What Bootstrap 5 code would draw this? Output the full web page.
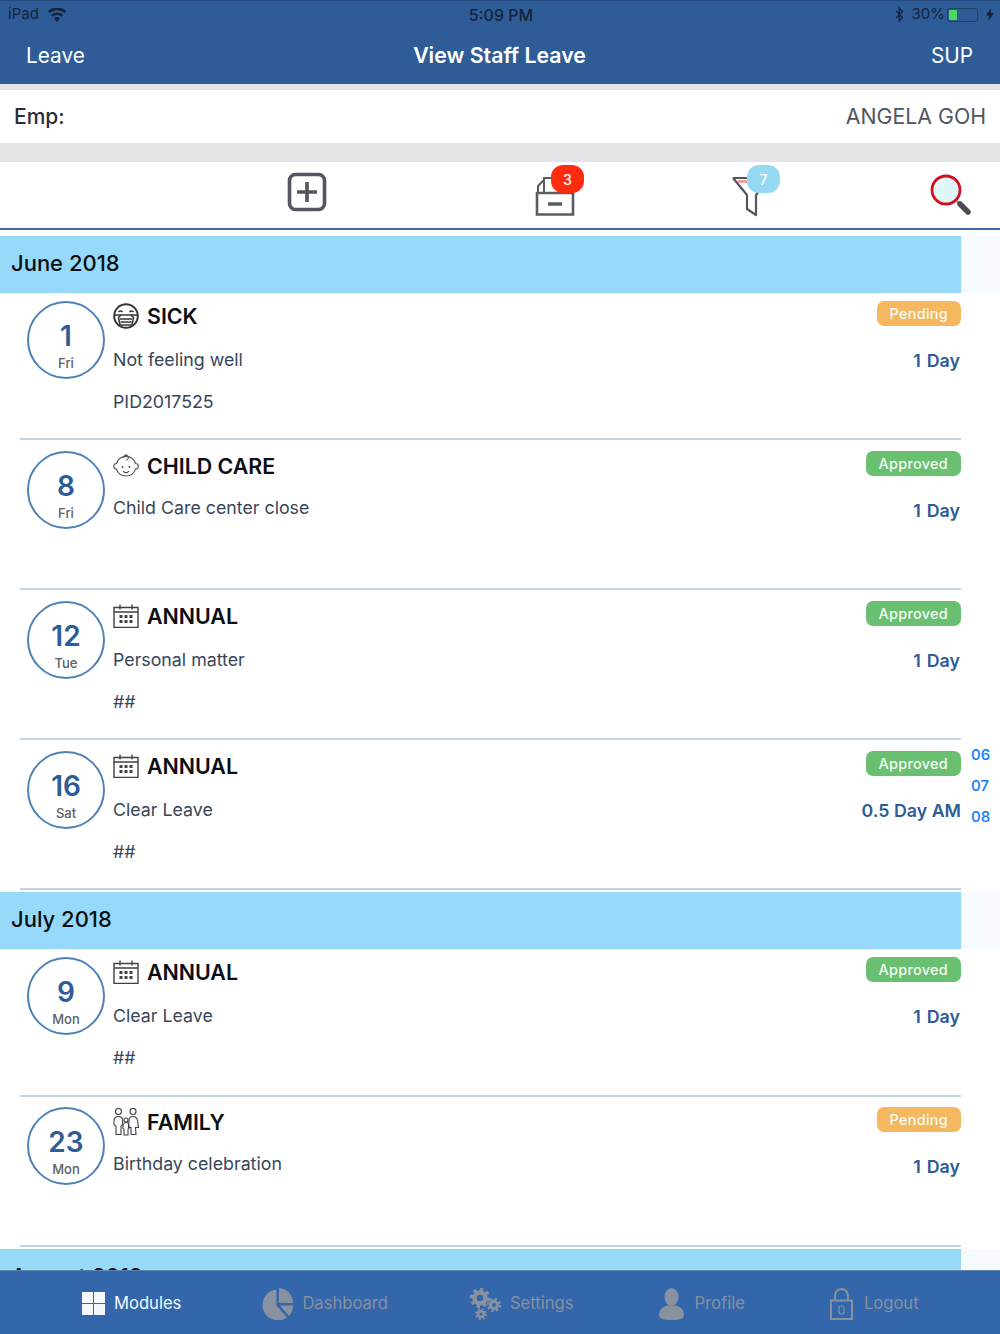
<!DOCTYPE html>
<html lang="en">
<head>
  <meta charset="UTF-8">
  <meta name="viewport" content="width=device-width, initial-scale=1.0">
  <title>View Staff Leave</title>
  <link href="https://cdn.jsdelivr.net/npm/bootstrap@5.3.0/dist/css/bootstrap.min.css" rel="stylesheet">
  <style>
    html, body { height: 100%; overflow: hidden; }
    body {
      font-family: Inter, "Liberation Sans", sans-serif;
      background-color: #fff;
      color: #333c48;
    }
    .app-head { height: 84px; background-color: #2e5c97; border-top: 1px solid #23497f; }
    .status-line { height: 27px; padding: 0 6px 0 8px; font-size: 15px; color: #14243a; }
    .status-time { font-size: 16px; font-weight: 500; }
    .status-side { width: 200px; }
    .nav-line { height: 54px; padding: 1px 27px 0 26px; color: #fff; font-size: 20.8px; }
    .nav-title { font-size: 21.3px; font-weight: 600; }
    .nav-end { width: 120px; }
    .batt { width: 31px; height: 14px; margin-left: 2px; border: 1px solid #1f3f66; border-radius: 3px; padding: 1px; }
    .batt-fill { width: 8px; height: 100%; background-color: #4cd964; border-radius: 1px; }
    .gap-strip { background-color: #e3e3e8; }
    .gap-a { height: 6px; }
    .gap-b { height: 19px; }
    .emp-line { height: 53px; padding: 1px 14px 0; }
    .emp-label { font-weight: 500; color: #2b2f36; font-size: 21px; }
    .emp-name { color: #50565f; font-size: 21.3px; }
    .tool-line { height: 68px; padding: 0 0 6px 287px; border-bottom: 2px solid #3c6ba6; }
    .tool-item { width: 40px; height: 40px; }
    .tool-b { margin-left: 208px; }
    .tool-c { margin-left: 155px; }
    .tool-d { margin-left: 160px; }
    .tool-count {
      top: -7px; width: 33px; height: 28px; border-radius: 12px;
      color: #fff; font-size: 14px; font-weight: 500;
    }
    .count-red { left: 16px; background-color: #ff2d10; }
    .count-blue { left: 17px; background-color: #96d9f2; }
    .list-top { height: 6px; }
    .month-wrap { background-color: #f7fbff; }
    .month-gap { margin-top: 2px; }
    .month-band {
      width: 961px; height: 57px; padding: 0 0 2px 11px;
      background-color: #96d9f8; color: #0b0f14;
      font-size: 22px; font-weight: 500;
    }
    .leave-item { width: 961px; padding-left: 20px; }
    .leave-body { height: 150px; padding: 11px 0 0 7px; border-bottom: 2px solid #c3d3e3; }
    .leave-first { height: 147px; padding-top: 8px; }
    .leave-wide { height: 148px; }
    .leave-tight { padding-top: 10px; }
    .date-ring {
      flex: 0 0 78px; height: 78px; margin-right: 8px; padding-top: 16.5px;
      border: 2px solid #4f83b8; border-radius: 50%;
      text-align: center;
    }
    .date-num { line-height: 33px; font-size: 28px; font-weight: 600; color: #2e5c97; }
    .date-day { line-height: 16px; margin-top: 2px; font-size: 13px; font-weight: 500; color: #5c6068; }
    .leave-title { height: 30px; margin-bottom: 8px; font-size: 21.4px; font-weight: 600; color: #0b0f14; gap: 8px; }
    .leave-title-short { margin-bottom: 6px; }
    .leave-text { line-height: 42px; font-size: 17.8px; color: #38465a; }
    .pill {
      height: 25px; padding: 0 13px; border-radius: 7px;
      color: #f4fbf4; font-size: 14.4px; font-weight: 500; letter-spacing: .3px;
    }
    .pill-ok { background-color: #68c070; }
    .pill-wait { background-color: #f5b85f; }
    .leave-days { margin-top: 15px; padding-right: 1px; line-height: 40px; font-size: 17.8px; font-weight: 600; word-spacing: 1.5px; color: #2e5c97; }
    .leave-days-half { word-spacing: 0; padding-right: 0; }
    .index-strip {
      top: 739px; right: 11px; width: 18px;
      color: #0a7aff; font-size: 15px; font-weight: 500; line-height: 31px; text-align: center;
    }
    .tab-line { height: 64px; padding: 2px 0 0 82px; background-color: #3366aa; border-top: 1px solid #5e86ad; font-size: 16.6px; color: #87919f; }
    .tab-item { gap: 9px; margin-left: 81px; }
    .tab-item:first-child { margin-left: 0; }
    .tab-far { gap: 11px; margin-left: 85px; }
    .tab-on { color: #f4f8fc; }
  </style>
</head>
<body>
  <svg width="0" height="0" class="position-absolute">
    <symbol id="ic-cal" viewBox="0 0 26 24">
      <path d="M1 3.500h24v20H1zM1 8h24" fill="none" stroke="#3d4249" stroke-width="1.400"/>
      <path d="M7 .5v5M19 .5v5" stroke="#3d4249" stroke-width="1.400"/>
      <path d="M6.500 11h3v3h-3zM11.500 11h3v3h-3zM16.500 11h3v3h-3zM6.500 16h3v3h-3zM11.500 16h3v3h-3zM16.500 16h3v3h-3z" fill="#3d4249"/>
    </symbol>
  </svg>

  <header class="app-head">
    <div class="status-line d-flex align-items-center justify-content-between">
      <div class="status-side d-flex align-items-center gap-2">
        <span>iPad</span>
        <svg width="20" height="14" viewBox="0 0 20 14"><path d="M10 14l-3-3.600a4.600 4.600 0 0 1 6 0zM5.600 8.700L3.900 6.700a9.300 9.300 0 0 1 12.200 0l-1.700 2a6.800 6.800 0 0 0-8.800 0zM2.500 5L.7 3a14 14 0 0 1 18.600 0l-1.800 2a11.400 11.400 0 0 0-15 0z" fill="#14243a"/></svg>
      </div>
      <span class="status-time">5:09 PM</span>
      <div class="status-side d-flex align-items-center justify-content-end">
        <svg class="me-2" width="9" height="15" viewBox="0 0 9 15"><path d="M1 4l6.500 6.500L4.200 14V1l3.300 3.500L1 11" fill="none" stroke="#14243a" stroke-width="1.400"/></svg>
        <span>30%</span>
        <div class="batt"><div class="batt-fill"></div></div>
        <svg class="ms-2" width="8" height="13" viewBox="0 0 8 13"><path d="M5 0L0 7.500h3L2.500 13 8 5H4.700z" fill="#14243a"/></svg>
      </div>
    </div>
    <div class="nav-line d-flex align-items-center justify-content-between">
      <span class="nav-end">Leave</span>
      <span class="nav-title">View Staff Leave</span>
      <span class="nav-end text-end">SUP</span>
    </div>
  </header>
  <div class="gap-strip gap-a"></div>
  <div class="emp-line d-flex align-items-center justify-content-between">
    <span class="emp-label">Emp:</span>
    <span class="emp-name">ANGELA GOH</span>
  </div>
  <div class="gap-strip gap-b"></div>

  <div class="tool-line d-flex align-items-center">
    <div class="tool-item-plain tool-item position-relative">
      <svg width="40" height="40" viewBox="0 0 40 40"><rect x="2.500" y="2.500" width="35" height="35" rx="6" fill="none" stroke="#55565f" stroke-width="3.600"/><path d="M20 10v20M10 20h20" stroke="#55565f" stroke-width="3.600"/></svg>
    </div>
    <div class="tool-item tool-b position-relative">
      <svg width="40" height="44" viewBox="0 0 40 44" class="overflow-visible"><path d="M2 21h36v21.500H2z" fill="none" stroke="#5a5c66" stroke-width="2.600"/><path d="M13 32h14" stroke="#5a5c66" stroke-width="3.500"/><path d="M3 21v-7l6-6M9 21V6h14" fill="none" stroke="#5a5c66" stroke-width="2"/></svg>
      <span class="tool-count count-red position-absolute d-flex align-items-center justify-content-center">3</span>
    </div>
    <div class="tool-item tool-c position-relative">
      <svg width="40" height="44" viewBox="0 0 40 44" class="overflow-visible"><path d="M3 6h24M3 6l14 17v14l9 6V23l6-8" fill="none" stroke="#55575f" stroke-width="2.200" stroke-linejoin="round"/><path d="M8 9.500h18" stroke="#f48a8c" stroke-width="2.500"/></svg>
      <span class="tool-count count-blue position-absolute d-flex align-items-center justify-content-center">7</span>
    </div>
    <div class="tool-item tool-d position-relative">
      <svg width="42" height="42" viewBox="0 -3 42 42" class="overflow-visible"><circle cx="16" cy="15" r="14" fill="#e0f7f7" stroke="#d0111b" stroke-width="2.800"/><path d="M6 11a10 10 0 0 1 8-6" fill="none" stroke="#fff" stroke-width="2"/><path d="M27 26l3 3" stroke="#777" stroke-width="2"/><path d="M30 29l8 8" stroke="#4a4d52" stroke-width="5.500" stroke-linecap="round"/></svg>
    </div>
  </div>

  <div class="list-top"></div>

  <div class="month-wrap"><div class="month-band d-flex align-items-center">June 2018</div></div>

  <div class="leave-item">
    <div class="leave-body leave-first d-flex">
      <div class="date-ring"><div class="date-num">1</div><div class="date-day">Fri</div></div>
      <div class="flex-grow-1">
        <div class="leave-title d-flex align-items-center">
          <svg width="26" height="26" viewBox="0 0 26 26"><circle cx="13" cy="13" r="11.800" fill="none" stroke="#33373d" stroke-width="2"/><path d="M5.500 9q2-2 4 0M16.500 9q2-2 4 0" fill="none" stroke="#33373d" stroke-width="1.500"/><path d="M8 12h10l2.500 2.500-1.500 7.500H7l-1.500-7.500z" fill="#fff" stroke="#33373d" stroke-width="1.500"/><path d="M1.500 12H8M24.500 12H18M7 16h12M7.500 19h11" stroke="#33373d" stroke-width="1.300"/></svg>
          <span>SICK</span>
        </div>
        <div class="leave-text">Not feeling well</div>
        <div class="leave-text">PID2017525</div>
      </div>
      <div class="text-end d-flex flex-column align-items-end">
        <span class="pill pill-wait d-inline-flex align-items-center">Pending</span>
        <div class="leave-days">1 Day</div>
      </div>
    </div>
  </div>

  <div class="leave-item">
    <div class="leave-body d-flex">
      <div class="date-ring"><div class="date-num">8</div><div class="date-day">Fri</div></div>
      <div class="flex-grow-1">
        <div class="leave-title leave-title-short d-flex align-items-center">
          <svg width="26" height="26" viewBox="0 0 26 26"><path d="M3.500 10.500a10 10.500 0 0 1 19 0 2.800 2.800 0 0 1 0 5.600 10 10 0 0 1-19 0 2.800 2.800 0 0 1 0-5.600z" fill="none" stroke="#55585e" stroke-width="1.200"/><path d="M13 7a2.300 2.300 0 1 0-2.300-2.300c0-1.800 1.600-3.100 3.500-2.700" fill="none" stroke="#55585e" stroke-width="1.100"/><circle cx="9.500" cy="14" r=".9" fill="#3d4249"/><circle cx="16.500" cy="14" r=".9" fill="#3d4249"/><path d="M10 18a3.600 3.600 0 0 0 6 0" fill="none" stroke="#3d4249" stroke-width="1.100"/></svg>
          <span>CHILD CARE</span>
        </div>
        <div class="leave-text">Child Care center close</div>
      </div>
      <div class="text-end d-flex flex-column align-items-end">
        <span class="pill pill-ok d-inline-flex align-items-center">Approved</span>
        <div class="leave-days">1 Day</div>
      </div>
    </div>
  </div>

  <div class="leave-item">
    <div class="leave-body d-flex">
      <div class="date-ring"><div class="date-num">12</div><div class="date-day">Tue</div></div>
      <div class="flex-grow-1">
        <div class="leave-title d-flex align-items-center">
          <svg width="26" height="24"><use href="#ic-cal"/></svg>
          <span>ANNUAL</span>
        </div>
        <div class="leave-text">Personal matter</div>
        <div class="leave-text">##</div>
      </div>
      <div class="text-end d-flex flex-column align-items-end">
        <span class="pill pill-ok d-inline-flex align-items-center">Approved</span>
        <div class="leave-days">1 Day</div>
      </div>
    </div>
  </div>

  <div class="leave-item">
    <div class="leave-body d-flex">
      <div class="date-ring"><div class="date-num">16</div><div class="date-day">Sat</div></div>
      <div class="flex-grow-1">
        <div class="leave-title d-flex align-items-center">
          <svg width="26" height="24"><use href="#ic-cal"/></svg>
          <span>ANNUAL</span>
        </div>
        <div class="leave-text">Clear Leave</div>
        <div class="leave-text">##</div>
      </div>
      <div class="text-end d-flex flex-column align-items-end">
        <span class="pill pill-ok d-inline-flex align-items-center">Approved</span>
        <div class="leave-days leave-days-half">0.5 Day AM</div>
      </div>
    </div>
  </div>

  <div class="month-wrap month-gap"><div class="month-band d-flex align-items-center">July 2018</div></div>

  <div class="leave-item">
    <div class="leave-body leave-first leave-wide d-flex">
      <div class="date-ring"><div class="date-num">9</div><div class="date-day">Mon</div></div>
      <div class="flex-grow-1">
        <div class="leave-title d-flex align-items-center">
          <svg width="26" height="24"><use href="#ic-cal"/></svg>
          <span>ANNUAL</span>
        </div>
        <div class="leave-text">Clear Leave</div>
        <div class="leave-text">##</div>
      </div>
      <div class="text-end d-flex flex-column align-items-end">
        <span class="pill pill-ok d-inline-flex align-items-center">Approved</span>
        <div class="leave-days">1 Day</div>
      </div>
    </div>
  </div>

  <div class="leave-item">
    <div class="leave-body leave-tight d-flex">
      <div class="date-ring"><div class="date-num">23</div><div class="date-day">Mon</div></div>
      <div class="flex-grow-1">
        <div class="leave-title leave-title-short d-flex align-items-center">
          <svg width="26" height="28" viewBox="0 0 26 28"><g fill="none" stroke="#3d4249" stroke-width="1.100"><circle cx="5.500" cy="3.500" r="3"/><circle cx="20" cy="3.500" r="3"/><circle cx="13" cy="12" r="2"/><path d="M1 13c0-3 2-4.500 4.500-4.500S9.500 10 9.500 12v5l-1.500 1v8.500H3V18l-2-1z"/><path d="M16 12c0-2 1.500-3.500 4-3.500s4 1.500 4.500 4l1 7h-3l.5 7h-5v-7h-2.500z"/><path d="M10 18c0-2 1.500-3.500 3-3.500s3 1.500 3 3.500v2.500l-1 .5v6h-4v-6l-1-.5z"/></g></svg>
          <span>FAMILY</span>
        </div>
        <div class="leave-text">Birthday celebration</div>
      </div>
      <div class="text-end d-flex flex-column align-items-end">
        <span class="pill pill-wait d-inline-flex align-items-center">Pending</span>
        <div class="leave-days">1 Day</div>
      </div>
    </div>
  </div>

  <div class="month-wrap month-gap"><div class="month-band d-flex align-items-center">August 2018</div></div>

  <div class="index-strip position-absolute">
    <div>06</div>
    <div>07</div>
    <div>08</div>
  </div>

  <nav class="tab-line fixed-bottom d-flex align-items-center">
    <div class="tab-item tab-on d-flex align-items-center">
      <svg width="23" height="23" viewBox="0 0 23 23"><path d="M0 0h11v11H0zM12 0h11v11H12zM0 12h11v11H0zM12 12h11v11H12z" fill="#f4f8fc"/></svg>
      <span>Modules</span>
    </div>
    <div class="tab-item d-flex align-items-center">
      <svg width="31" height="32" viewBox="0 0 31 32"><path d="M14.500 1.500v16l10.500 12A15.500 15.500 0 1 1 14.500 1.500z" fill="#87919f"/><path d="M17 0a15 15 0 0 1 14 15H17z" fill="#87919f"/><path d="M18 17.500h13a15 15 0 0 1-4 10.500z" fill="#87919f"/></svg>
      <span>Dashboard</span>
    </div>
    <div class="tab-item d-flex align-items-center">
      <svg width="32" height="32" viewBox="0 0 32 32"><g fill="none" stroke="#87919f"><circle cx="11" cy="10" r="5.500" stroke-width="4.500"/><circle cx="11" cy="10" r="8.500" stroke-width="3.500" stroke-dasharray="3.200 3.400"/><circle cx="25" cy="17" r="3.500" stroke-width="3"/><circle cx="25" cy="17" r="5.800" stroke-width="2.600" stroke-dasharray="2.300 2.250"/><circle cx="12" cy="26" r="2.800" stroke-width="2.600"/><circle cx="12" cy="26" r="4.800" stroke-width="2.200" stroke-dasharray="2 1.770"/></g></svg>
      <span>Settings</span>
    </div>
    <div class="tab-item tab-far d-flex align-items-center">
      <svg width="25" height="32" viewBox="0 0 25 32"><ellipse cx="12.500" cy="9" rx="7" ry="9" fill="#87919f"/><path d="M0 27c0-6 4-8 8-9.500h9c4 1.500 8 3.500 8 9.500 0 3-3 5-12.500 5S0 30 0 27z" fill="#87919f"/></svg>
      <span>Profile</span>
    </div>
    <div class="tab-item tab-far d-flex align-items-center">
      <svg width="23" height="32" viewBox="0 0 23 32"><path d="M1 12.500h21V31H1zM5 12.500V8a6.500 7 0 0 1 13 0v4.500" fill="none" stroke="#87919f" stroke-width="2"/><rect x="9" y="18" width="5" height="8" rx="2" fill="none" stroke="#87919f" stroke-width="1.200"/></svg>
      <span>Logout</span>
    </div>
  </nav>
  <script src="https://cdn.jsdelivr.net/npm/bootstrap@5.3.0/dist/js/bootstrap.bundle.min.js"></script>
</body>
</html>
